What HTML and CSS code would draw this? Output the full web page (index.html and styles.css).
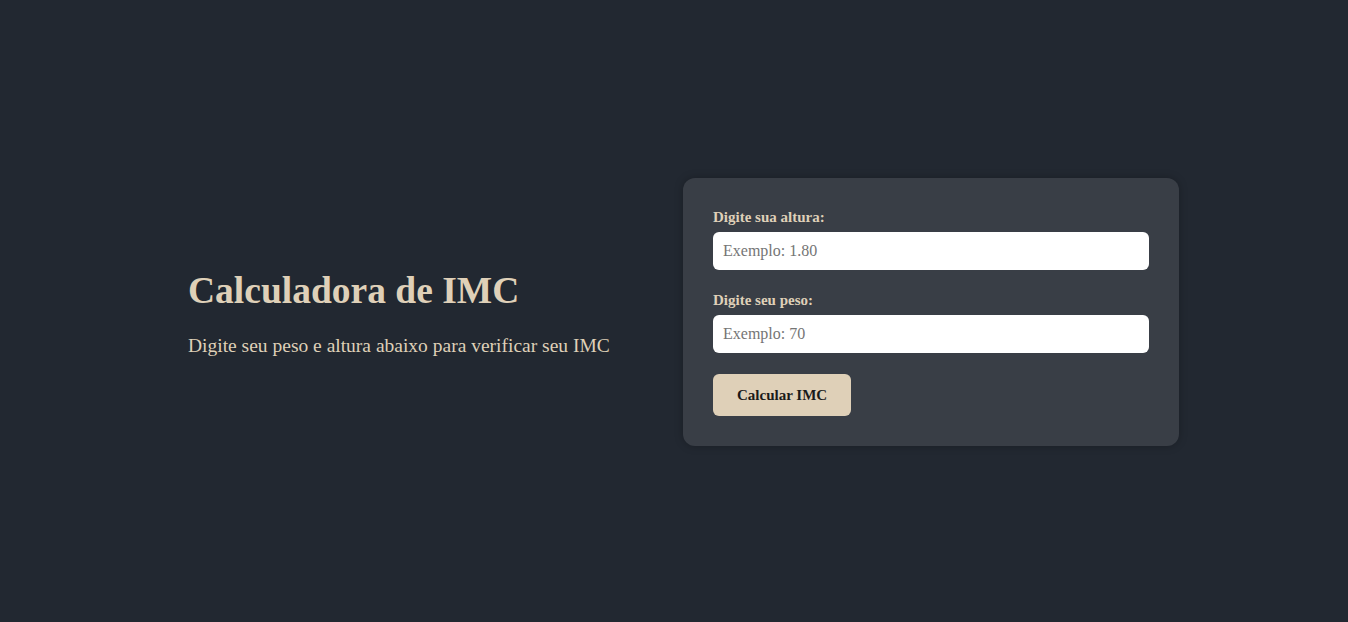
FILE: index.html
```html
<!DOCTYPE html>
<html lang="pt-BR">
<head>
<meta charset="utf-8">
<title>Calculadora de IMC</title>
<link rel="stylesheet" href="styles.css">
</head>
<body>
<main class="page">
  <section class="intro">
    <h1 class="title">Calculadora de IMC</h1>
    <p class="subtitle">Digite seu peso e altura abaixo para verificar seu IMC</p>
  </section>
  <form class="card">
    <label class="label" for="altura">Digite sua altura:</label>
    <input class="input" id="altura" type="text" placeholder="Exemplo: 1.80">
    <label class="label" for="peso">Digite seu peso:</label>
    <input class="input" id="peso" type="text" placeholder="Exemplo: 70">
    <button class="button" type="button">Calcular IMC</button>
  </form>
</main>
</body>
</html>
```
FILE: styles.css
```css
* { box-sizing: border-box; }
html, body { margin: 0; padding: 0; }
body {
  background: #222831;
  font-family: "Liberation Serif", "DejaVu Serif", serif;
  color: #DFD0B8;
}
.page {
  min-height: 100vh;
  display: flex;
  align-items: center;
  justify-content: center;
  padding-left: 19px;
}
.intro {
  width: 495px;
  padding-top: 6px;
}
.title {
  margin: 0 0 18px;
  font-size: 37.5px;
  font-weight: 700;
  line-height: 1.2;
  color: #DFD0B8;
}
.subtitle {
  margin: 0;
  font-size: 19.5px;
  line-height: 1.5;
}
.card {
  width: 496px;
  margin-top: 2px;
  background: #393E46;
  border-radius: 12px;
  padding: 30px;
  display: flex;
  flex-direction: column;
  align-items: flex-start;
  box-shadow: 0 0 8px rgba(0, 0, 0, 0.25);
}
.label {
  font-size: 15px;
  font-weight: 700;
  line-height: 18px;
  margin-bottom: 6px;
}
.input {
  width: 100%;
  height: 38px;
  border: none;
  border-radius: 6px;
  background: #fff;
  padding: 0 10px;
  font-family: inherit;
  font-size: 16px;
  margin-bottom: 21px;
  outline: none;
}
.input::placeholder { color: #757575; }
.button {
  height: 42px;
  padding: 0 24px;
  border: none;
  border-radius: 6px;
  background: #DFD0B8;
  color: #1a1a1a;
  font-family: inherit;
  font-size: 15px;
  font-weight: 700;
  cursor: pointer;
}
```
